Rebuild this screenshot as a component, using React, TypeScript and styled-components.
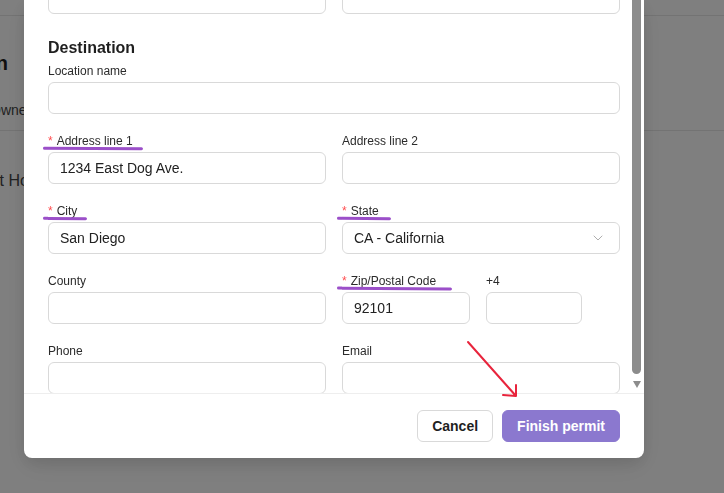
import React from 'react';
import styled, { createGlobalStyle } from 'styled-components';
import { ChevronDown } from 'lucide-react';

const GlobalStyle = createGlobalStyle`
  html, body {
    margin: 0;
    padding: 0;
    height: 100%;
    overflow: hidden;
    background: #ffffff;
    font-family: "Liberation Sans", Arial, sans-serif;
  }
  * {
    box-sizing: border-box;
  }
`;

const App = () => {
  return (
    <>
      <GlobalStyle />
      <Page>
        <TopBar />
        <PageTitle>Transportation</PageTitle>
        <PageSub>Owner name and details</PageSub>
        <PageRow>Pet Hotel and boarding</PageRow>
      </Page>

      <Overlay>
        <Modal>
          <Body>
            <Content>
              <FieldGrid>
                <Field>
                  <Label>Phone</Label>
                  <Input readOnly value="" />
                </Field>
                <Field>
                  <Label>Email</Label>
                  <Input readOnly value="" />
                </Field>
              </FieldGrid>

              <SectionTitle>Destination</SectionTitle>
              <FieldGrid>
                <Field $wide>
                  <Label>Location name</Label>
                  <Input readOnly value="" />
                </Field>
                <Field>
                  <Label $mark={10}>
                    <Star>*</Star>Address line 1
                  </Label>
                  <Input readOnly value="1234 East Dog Ave." />
                </Field>
                <Field>
                  <Label>Address line 2</Label>
                  <Input readOnly value="" />
                </Field>
                <Field>
                  <Label $mark={10}>
                    <Star>*</Star>City
                  </Label>
                  <Input readOnly value="San Diego" />
                </Field>
                <Field>
                  <Label $mark={12}>
                    <Star>*</Star>State
                  </Label>
                  <Select>
                    <span>CA - California</span>
                    <ChevronDown size={16} strokeWidth={1.4} color="#a8a8a8" />
                  </Select>
                </Field>
                <Field>
                  <Label>County</Label>
                  <Input readOnly value="" />
                </Field>
                <ZipGroup>
                  <Field $width={128}>
                    <Label $mark={16}>
                      <Star>*</Star>Zip/Postal Code
                    </Label>
                    <Input readOnly value="92101" />
                  </Field>
                  <Field $width={96}>
                    <Label>+4</Label>
                    <Input readOnly value="" />
                  </Field>
                </ZipGroup>
                <Field>
                  <Label>Phone</Label>
                  <Input readOnly value="" />
                </Field>
                <Field>
                  <Label>Email</Label>
                  <Input readOnly value="" />
                </Field>
              </FieldGrid>
            </Content>

            <ScrollTrack>
              <ScrollThumb />
              <ScrollArrow />
            </ScrollTrack>
          </Body>
          <Footer>
            <Button>Cancel</Button>
            <Button $primary>Finish permit</Button>
          </Footer>
        </Modal>

        <Arrow width="64" height="66" viewBox="0 0 64 66">
          <path
            d="M8 7 L56 61 M56 61 L56 50 M56 61 L43 60"
            fill="none"
            stroke="#e8243c"
            strokeWidth="2"
            strokeLinecap="round"
            strokeLinejoin="round"
          />
        </Arrow>
      </Overlay>
    </>
  );
};

/* page behind the dialog */

const Page = styled.div`
  color: #1f1f1f;
`;

const TopBar = styled.div`
  height: 16px;
  border-bottom: 1px solid #e6e6e6;
`;

const PageTitle = styled.h1`
  margin: 35px 0 0 -132px;
  font-size: 20px;
  line-height: 24px;
  font-weight: bold;
  white-space: nowrap;
`;

const PageSub = styled.div`
  margin: 25px 0 0 -10px;
  padding-bottom: 10px;
  font-size: 14px;
  line-height: 20px;
  color: #444;
  white-space: nowrap;
  border-bottom: 1px solid #e6e6e6;
  width: calc(100% + 10px);
`;

const PageRow = styled.div`
  margin: 40px 0 0 -20px;
  font-size: 16px;
  line-height: 20px;
  color: #444;
  white-space: nowrap;
`;

/* dialog */

const Overlay = styled.div`
  position: fixed;
  inset: 0;
  background: rgba(0, 0, 0, 0.5);
  display: flex;
  flex-direction: column;
  justify-content: flex-end;
  align-items: flex-start;
  padding: 0 0 35px 24px;
  overflow: hidden;
`;

const Modal = styled.div`
  width: 620px;
  flex-shrink: 0;
  background: #ffffff;
  border-radius: 0 0 8px 8px;
  box-shadow: 0 6px 16px rgba(0, 0, 0, 0.1), 0 9px 28px rgba(0, 0, 0, 0.06);
  display: flex;
  flex-direction: column;
  overflow: hidden;
`;

const Body = styled.div`
  position: relative;
  height: 393px;
  overflow: hidden;
  padding: 0 24px;
`;

const Content = styled.div`
  margin-top: -18px;
`;

const SectionTitle = styled.h3`
  margin: 22px 0 2px;
  font-size: 16px;
  line-height: 24px;
  font-weight: bold;
  color: #1f1f1f;
`;

const FieldGrid = styled.div`
  display: grid;
  grid-template-columns: 1fr 1fr;
  gap: 18px 16px;

  &:first-child label {
    display: none;
  }
`;

const Field = styled.div<{ $wide?: boolean; $width?: number }>`
  display: flex;
  flex-direction: column;
  align-items: flex-start;
  grid-column: ${(p) => (p.$wide ? '1 / span 2' : 'auto')};
  width: ${(p) => (p.$width ? `${p.$width}px` : 'auto')};
`;

const ZipGroup = styled.div`
  display: flex;
  gap: 16px;
`;

const Label = styled.label<{ $mark?: number }>`
  position: relative;
  display: inline-block;
  margin-bottom: 2px;
  font-size: 12px;
  line-height: 18px;
  color: #2b2b2b;
  white-space: nowrap;

  &::after {
    content: '';
    display: ${(p) => (p.$mark ? 'block' : 'none')};
    position: absolute;
    left: -5px;
    right: -${(p) => p.$mark ?? 0}px;
    top: 15px;
    height: 2.5px;
    border-radius: 2px;
    background: #9b4fc9;
    transform: rotate(0.4deg);
  }
`;

const Star = styled.span`
  color: #ff4d4f;
  margin-right: 4px;
`;

const Input = styled.input`
  width: 100%;
  height: 32px;
  padding: 0 11px;
  border: 1px solid #d9d9d9;
  border-radius: 6px;
  background: #ffffff;
  font-family: inherit;
  font-size: 14px;
  color: #222;
  outline: none;
`;

const Select = styled.div`
  width: 100%;
  height: 32px;
  padding: 0 13px 0 11px;
  border: 1px solid #d9d9d9;
  border-radius: 6px;
  display: flex;
  align-items: center;
  justify-content: space-between;
  font-size: 14px;
  color: #222;
`;

const ScrollTrack = styled.div`
  position: absolute;
  top: 0;
  bottom: 0;
  right: 3px;
  width: 9px;
`;

const ScrollThumb = styled.div`
  position: absolute;
  top: -20px;
  bottom: 19px;
  left: 0;
  right: 0;
  border-radius: 5px;
  background: #8c8c8c;
`;

const ScrollArrow = styled.div`
  position: absolute;
  bottom: 5px;
  left: 0.5px;
  width: 0;
  height: 0;
  border-left: 4px solid transparent;
  border-right: 4px solid transparent;
  border-top: 7px solid #8c8c8c;
`;

const Footer = styled.div`
  border-top: 1px solid #eeeeee;
  padding: 16px 24px;
  display: flex;
  justify-content: flex-end;
  gap: 9px;
`;

const Button = styled.button<{ $primary?: boolean }>`
  height: 32px;
  padding: 0 14px;
  border-radius: 6px;
  border: 1px solid ${(p) => (p.$primary ? '#8b78cf' : '#d9d9d9')};
  background: ${(p) => (p.$primary ? '#8b78cf' : '#ffffff')};
  color: ${(p) => (p.$primary ? '#ffffff' : '#1f1f1f')};
  font-family: inherit;
  font-size: 14px;
  font-weight: bold;
  cursor: pointer;
`;

const Arrow = styled.svg`
  position: absolute;
  left: 460px;
  top: 335px;
`;

export default App;
